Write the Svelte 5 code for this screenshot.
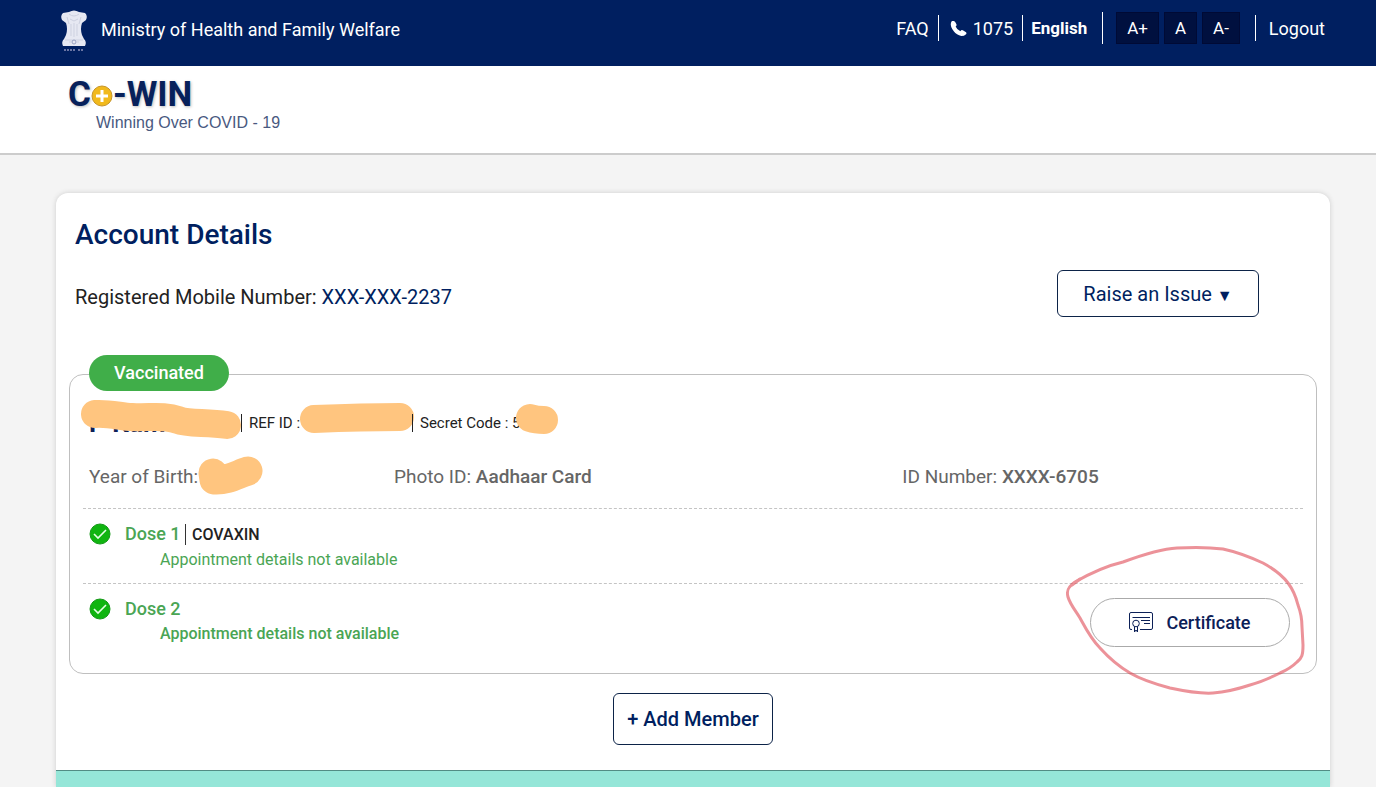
<script lang="ts">
	interface Dose {
		label: string;
		vaccine?: string;
		note: string;
		final?: boolean;
	}

	const doses: Dose[] = [
		{ label: 'Dose 1', vaccine: 'COVAXIN', note: 'Appointment details not available' },
		{ label: 'Dose 2', note: 'Appointment details not available', final: true }
	];
</script>

<div class="page">
	<header class="topbar">
		<div class="ministry">
			<svg class="emblem" viewBox="0 0 28 44" aria-hidden="true">
				<path
					d="M9 3 Q14 0 19 3 L25 4 Q28 7 26 11 L22 14 Q20 20 22 26 L24 30 Q27 33 25 37 H3 Q1 33 4 30 L6 26 Q8 20 6 14 L2 11 Q0 7 3 4Z"
					fill="#e6e8f2"
				/>
				<path
					d="M9 5 Q14 9 19 5 M10 10 L14 12 L18 10 M11 15 V27 M14 14 V28 M17 15 V27 M7 8 L9 15 M21 8 L19 15 M5 31 H23 M9 33 H11 M17 33 H19"
					fill="none"
					stroke="#cdd1e0"
				/>
				<circle cx="14" cy="33" r="2" fill="none" stroke="#9ba3c3" />
				<path d="M4 41 H15 M18 41 H24" stroke="#6a75a3" stroke-width="2" stroke-dasharray="2 1" />
			</svg>
			<span>Ministry of Health and Family Welfare</span>
		</div>
		<nav class="links">
			<a href="#faq">FAQ</a>
			<a class="divided phone" href="tel:1075">
				<svg viewBox="0 0 18 18" aria-hidden="true">
					<path
						d="M2 1 L4 1 Q5 1 6 3 L7 5 Q7 6 6 7 Q7 10 11 12 Q12 10 14 11 L17 13 Q18 14 17 15 Q15 17 12 17 Q7 16 4 12 Q0 7 1 3Z"
						fill="#fff"
					/>
				</svg>
				1075
			</a>
			<button class="divided language">English</button>
			<div class="sizes">
				<button>A+</button>
				<button>A</button>
				<button>A-</button>
			</div>
			<a class="divided logout" href="#logout">Logout</a>
		</nav>
	</header>

	<div class="brandbar">
		<a class="brand" href="#home">
			<span class="wordmark">
				C<svg viewBox="0 0 22 22" role="img" aria-label="o">
					<circle cx="11" cy="11" r="10" fill="#f1b91c" stroke="#c6952b" />
					<path d="M11 5 V17 M5 11 H17" stroke="#fff" stroke-width="3" />
				</svg>-WIN
			</span>
			<span class="tagline">Winning Over COVID - 19</span>
		</a>
	</div>

	<main class="card">
		<section class="account">
			<h1>Account Details</h1>
			<div class="account-row">
				<p>Registered Mobile Number: <span>XXX-XXX-2237</span></p>
				<button class="outlined issue">Raise an Issue <small>▼</small></button>
			</div>
		</section>

		<article class="member">
			<span class="status">Vaccinated</span>
			<div class="identity">
				<h2>
					P Kum
					<svg class="redaction over-name" viewBox="0 0 162 42" aria-hidden="true">
						<path d="M15 15 C30 14 42 18 52 18 C70 19 84 16 98 21 C108 25 125 23 147 26" />
					</svg>
				</h2>
				<span class="ref">
					REF ID :
					<svg class="redaction over-ref" viewBox="0 0 116 32" aria-hidden="true">
						<path d="M15 17 C40 16 70 15 101 15" />
					</svg>
				</span>
				<span class="secret">
					Secret Code : 5
					<svg class="redaction over-secret" viewBox="0 0 44 32" aria-hidden="true">
						<path d="M15 15 C21 17 26 17 29 17" />
					</svg>
				</span>
			</div>
			<div class="details">
				<div class="birth">
					Year of Birth:
					<svg class="redaction" viewBox="0 0 66 40" aria-hidden="true">
						<path d="M15 17 L16 24 C30 25 40 18 50 15" />
					</svg>
				</div>
				<div>Photo ID: <strong>Aadhaar Card</strong></div>
				<div>ID Number: <strong>XXXX-6705</strong></div>
			</div>

			{#each doses as dose}
				<div class="dose" class:final={dose.final}>
					<svg class="check" viewBox="0 0 22 22" aria-hidden="true">
						<circle cx="11" cy="11" r="10" fill="#10b510" stroke="#169a19" />
						<path d="M5 11 L9 15 L17 7" fill="none" stroke="#e4ffe4" stroke-width="1.6" />
					</svg>
					<div class="dose-text">
						<h3>
							{dose.label}
							{#if dose.vaccine}<span>{dose.vaccine}</span>{/if}
						</h3>
						<p>{dose.note}</p>
					</div>
					{#if dose.final}
						<div class="certificate-wrap">
							<button class="certificate">
								<svg viewBox="0 0 24 21" fill="none" stroke="#0c2057" aria-hidden="true">
									<path d="M3 17.5 H2 Q.5 17.5 .5 16 V2 Q.5 .5 2 .5 H22 Q23.5 .5 23.5 2 V16 Q23.5 17.5 22 17.5 H11" />
									<path d="M3.5 5.5 H21 M12 8.5 H21 M15 11.5 H21" />
									<circle cx="7" cy="11.5" r="3.3" />
									<path d="M5.5 14.5 V20 L7 18 L8.5 20 V14.5" />
								</svg>
								Certificate
							</button>
							<svg class="marker" viewBox="0 0 240 152" aria-hidden="true">
								<path
									d="M2 53 C0 46 3 42 9 38 C23 30 40 22 57 18 C76 11 94 5 111 4 C128 3 142 3 157 5 C171 8 184 13 197 19 C208 25 216 31 222 39 C228 47 230 53 232 61 C235 69 236 75 236 83 L237 101 C237 111 236 114 231 118 C226 123 221 126 214 129 C204 134 195 138 184 141 C172 145 160 148 147 149 C132 150 118 147 104 144 C89 140 76 136 64 129 C52 122 43 114 34 104 C25 95 20 85 14 74 C9 66 4 60 2 53Z"
								/>
								<path d="M6 41 L14 35" />
							</svg>
						</div>
					{/if}
				</div>
			{/each}
		</article>

		<button class="outlined add">+ Add Member</button>
		<div class="band"></div>
	</main>
</div>

<style>
	:global(body) {
		margin: 0;
		background: #f4f4f4;
		font-family: Roboto, 'Liberation Sans', sans-serif;
	}

	.page {
		min-height: 100vh;
		display: flex;
		flex-direction: column;
	}

	button {
		font-family: inherit;
		cursor: pointer;
	}

	a {
		color: inherit;
		text-decoration: none;
	}

	h1,
	h2,
	h3,
	p {
		margin: 0;
	}

	.topbar {
		display: flex;
		justify-content: space-between;
		box-sizing: border-box;
		height: 66px;
		padding: 9px 51px 0 60px;
		background: #001f60;
		color: #fff;
		font-size: 18px;
	}

	.ministry {
		display: flex;
		gap: 13px;
		line-height: 42px;
	}

	.emblem {
		width: 28px;
		height: 44px;
	}

	.links {
		display: flex;
		align-items: center;
		height: 38px;
	}

	.divided {
		display: flex;
		align-items: center;
		height: 26px;
		margin-left: 9px;
		padding: 0 0 0 11px;
		border: 0;
		border-left: 1px solid #fff;
	}

	.phone svg {
		width: 17px;
		height: 17px;
		margin-right: 6px;
	}

	.language {
		padding-left: 8px;
		background: none;
		color: #fff;
		font-size: 17px;
		font-weight: 700;
	}

	.sizes {
		display: flex;
		align-items: center;
		gap: 5px;
		height: 32px;
		margin-left: 15px;
		padding-left: 13px;
		border-left: 1px solid #fff;
	}

	.sizes button {
		height: 32px;
		padding: 0 10px;
		border: 1px solid #000a35;
		background: #00103f;
		color: #fff;
		font-size: 17px;
	}

	.logout {
		margin-left: 15px;
		padding-left: 13px;
	}

	.brandbar {
		box-sizing: border-box;
		height: 89px;
		padding: 12px 68px 0;
		background: #fff;
		border-bottom: 2px solid #ccc;
	}

	.brand {
		display: inline-flex;
		flex-direction: column;
	}

	.wordmark {
		display: flex;
		align-items: center;
		height: 32px;
		color: #07215b;
		font-size: 35px;
		font-weight: 700;
		text-shadow: 1px 1px 3px #bbb;
	}

	.wordmark svg {
		width: 22px;
		height: 22px;
		margin-top: 4px;
	}

	.tagline {
		margin-left: 28px;
		color: #49597f;
		font: 16px/26px 'Liberation Sans', sans-serif;
	}

	.card {
		flex: 1;
		display: flex;
		flex-direction: column;
		margin: 38px 46px 0 56px;
		border-radius: 12px 12px 0 0;
		background: #fff;
		box-shadow: 0 0 5px #ccc;
	}

	.account {
		padding: 24px 71px 0 19px;
		color: #222;
	}

	h1 {
		color: #001f60;
		font-size: 28px;
		font-weight: 500;
		line-height: 36px;
	}

	.account-row {
		display: flex;
		justify-content: space-between;
		align-items: center;
		margin-top: 17px;
		font-size: 20px;
	}

	.account-row p {
		padding-top: 6px;
	}

	.account-row span {
		color: #001f60;
	}

	.outlined {
		border: 1px solid #0c2348;
		border-radius: 6px;
		background: #fff;
		color: #001f60;
		font-size: 20px;
	}

	.issue {
		width: 202px;
		height: 47px;
	}

	.issue small {
		font-size: 16px;
	}

	.member {
		margin: 57px 13px 0;
		padding: 0 13px;
		border: 1px solid #bfbfbf;
		border-radius: 14px;
		color: #666;
	}

	.status {
		display: block;
		width: 140px;
		height: 36px;
		margin: -20px 0 0 6px;
		border-radius: 18px;
		background: #40ae49;
		color: #fff;
		font-size: 18px;
		font-weight: 500;
		line-height: 36px;
		text-align: center;
	}

	.identity {
		display: flex;
		align-items: center;
		height: 40px;
		margin-top: 12px;
		padding-left: 6px;
		color: #222;
		font-size: 15px;
	}

	.identity h2 {
		position: relative;
		width: 152px;
		color: #0c2057;
		font-size: 26px;
		font-weight: 700;
		line-height: 40px;
	}

	.ref,
	.secret {
		position: relative;
		padding-left: 7px;
		border-left: 1px solid #222;
	}

	.ref {
		width: 163px;
	}

	.redaction {
		fill: none;
		stroke: #ffc57f;
		stroke-width: 28px;
		stroke-linecap: round;
		stroke-linejoin: round;
	}

	.over-name,
	.over-ref,
	.over-secret {
		position: absolute;
	}

	.over-name {
		top: -4px;
		left: -9px;
		width: 162px;
		height: 42px;
	}

	.over-ref {
		top: -12px;
		right: -3px;
		width: 116px;
		height: 32px;
	}

	.over-secret {
		top: -11px;
		left: 102px;
		width: 44px;
		height: 32px;
	}

	.details {
		display: grid;
		grid-template-columns: 3fr 5fr 4fr;
		align-items: center;
		height: 64px;
		margin-top: 1px;
		font-size: 19px;
	}

	.details > div {
		padding-left: 6px;
	}

	.details strong {
		font-weight: 500;
	}

	.birth {
		display: flex;
		align-items: center;
	}

	.birth svg {
		width: 66px;
		height: 40px;
		stroke-width: 29px;
	}

	.dose {
		display: flex;
		align-items: flex-start;
		box-sizing: border-box;
		height: 75px;
		padding: 14px 13px 0 6px;
		border-top: 1px dashed #c4c4c4;
		color: #4aa554;
	}

	.dose.final {
		height: 90px;
	}

	.check {
		width: 22px;
		height: 22px;
		margin-right: 14px;
	}

	.dose-text {
		flex: 1;
	}

	.dose h3 {
		font-size: 18px;
		font-weight: 500;
		line-height: 22px;
	}

	.dose h3 span {
		padding: 1px 0 1px 6px;
		border-left: 1px solid #333;
		color: #222;
		font-size: 16px;
	}

	.dose p {
		padding-left: 35px;
		font-size: 16px;
		line-height: 28px;
	}

	.final p {
		font-weight: 500;
	}

	.certificate-wrap {
		position: relative;
	}

	.certificate {
		display: flex;
		justify-content: center;
		align-items: center;
		gap: 13px;
		width: 200px;
		height: 49px;
		border: 1px solid #aaa;
		border-radius: 25px;
		background: #fff;
		color: #0c2057;
		font-size: 18px;
		font-weight: 500;
	}

	.certificate svg {
		width: 24px;
		height: 21px;
	}

	.marker {
		position: absolute;
		top: -54px;
		left: -24px;
		width: 240px;
		height: 152px;
		fill: none;
		stroke: #df4450;
		stroke-width: 3px;
		stroke-linecap: round;
		opacity: 0.58;
		pointer-events: none;
	}

	.add {
		align-self: center;
		width: 160px;
		height: 52px;
		margin: 19px 0 25px;
		font-weight: 500;
	}

	.band {
		flex: 1;
		min-height: 16px;
		border-top: 1px solid #528c84;
		background: #95e6d8;
	}
</style>
